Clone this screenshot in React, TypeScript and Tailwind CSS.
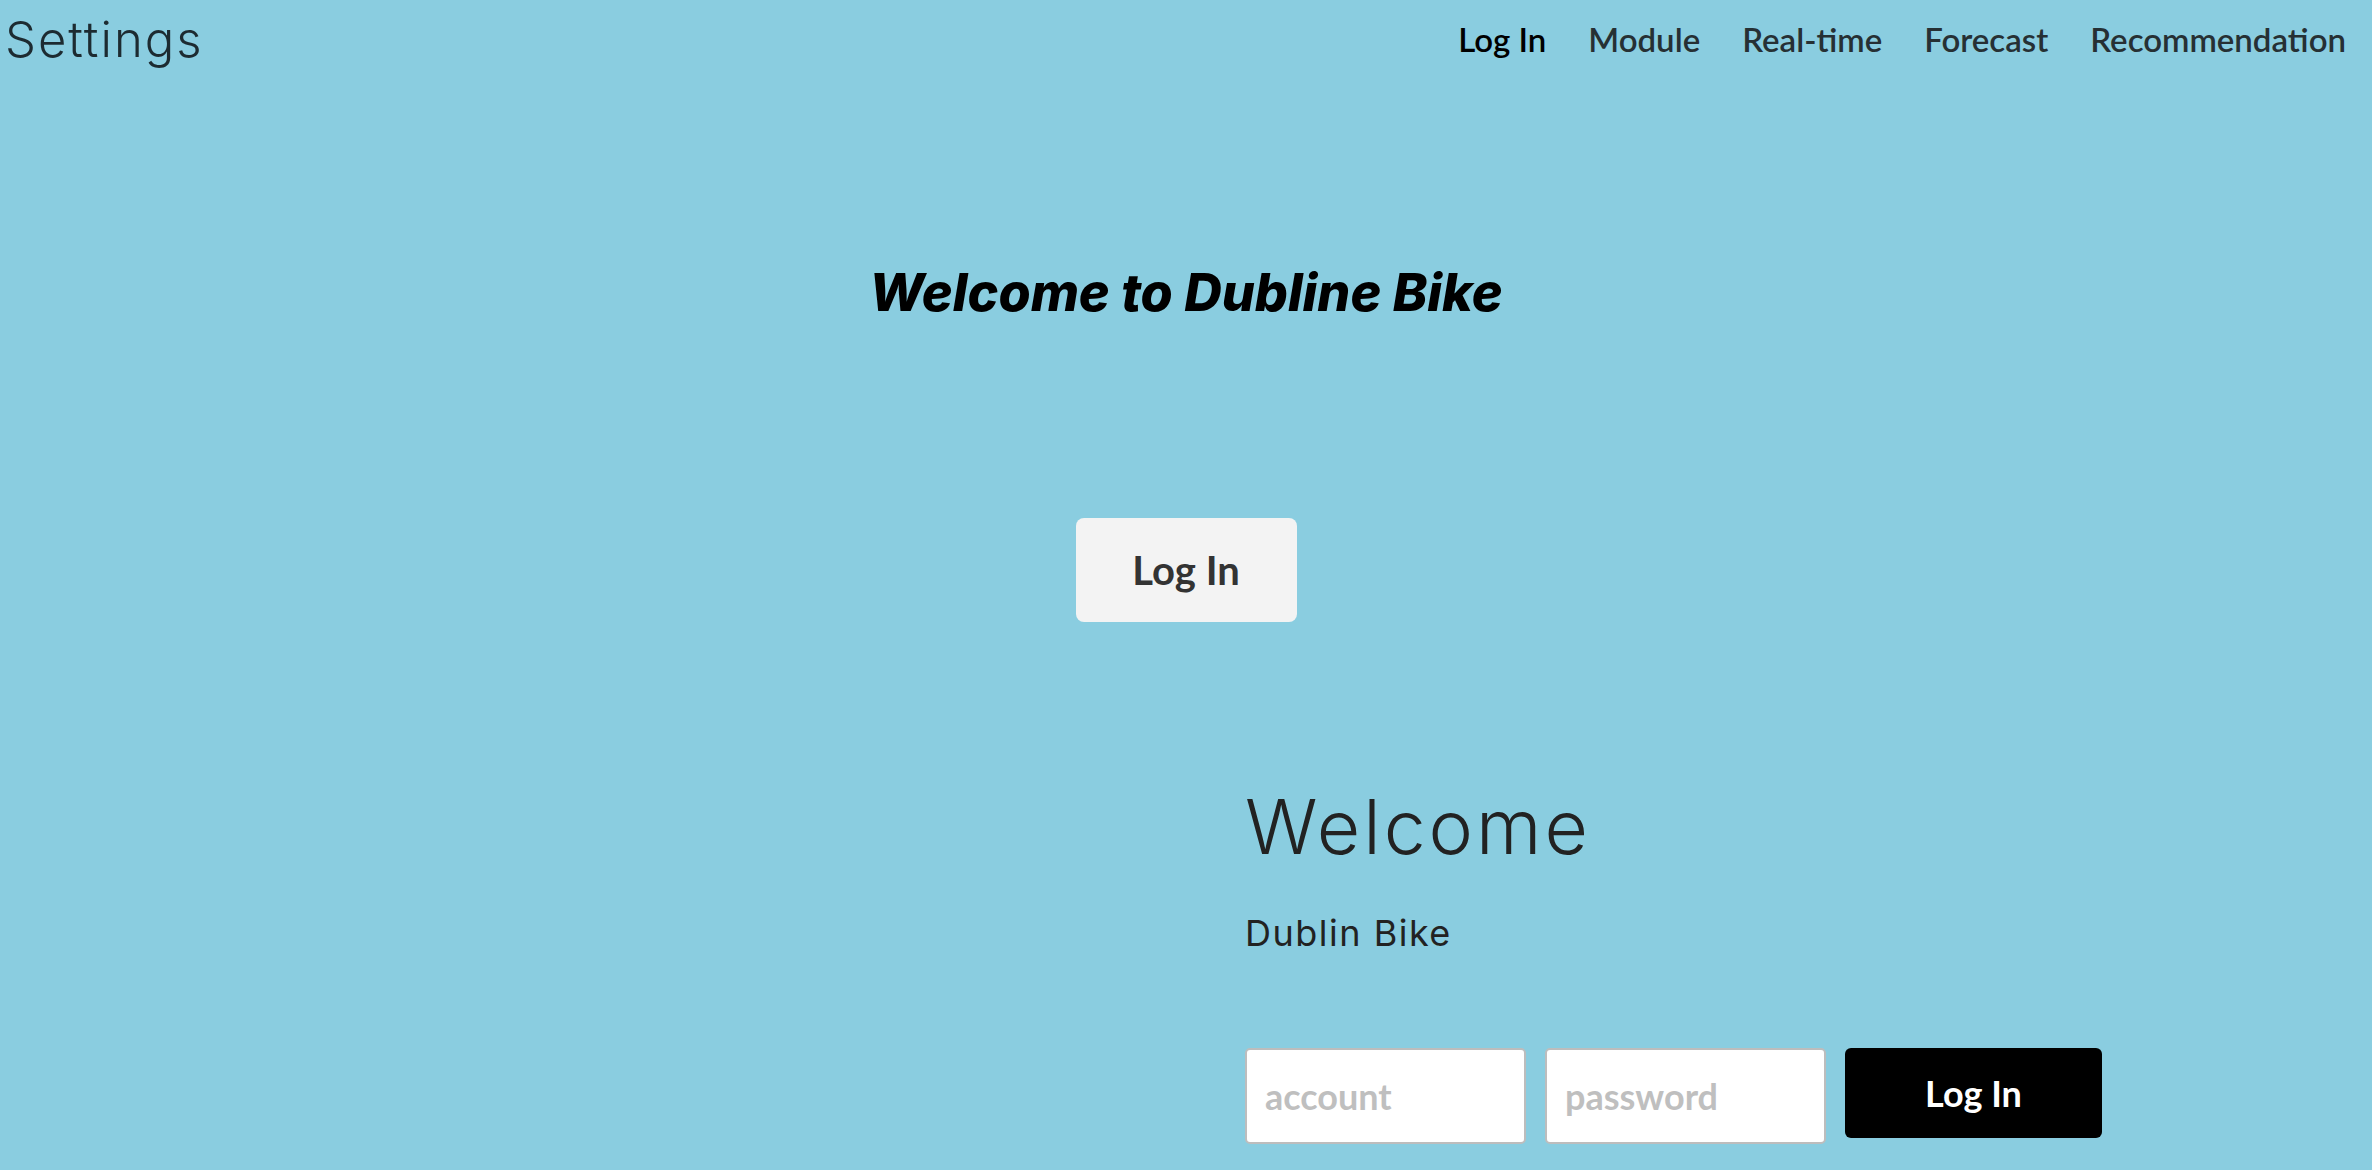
import React from 'react';

const futura = { fontFamily: 'Lato, "Noto Sans", sans-serif' };
const mont = { fontFamily: 'Inter, "Noto Sans", sans-serif' };

const navItems = ['Log In', 'Module', 'Real-time', 'Forecast', 'Recommendation'];

export default function App() {
  return (
    <div className="min-h-screen w-full bg-[#8acde0]">
      {/* Header */}
      <header className="flex items-start justify-between pl-[5px] pr-[26px] pt-[15px]">
        <div style={mont} className="text-[49px] font-light leading-none tracking-[2px] text-[#1d2b31]">
          Settings
        </div>
        <nav style={futura} className="flex items-center gap-[42px] pt-[8px]">
          {navItems.map((item, i) => (
            <a
              key={item}
              className={`text-[33px] font-semibold leading-none ${i === 0 ? 'text-black' : 'text-[#263034]'}`}
            >
              {item}
            </a>
          ))}
        </nav>
      </header>

      {/* Hero */}
      <section className="flex flex-col items-center pt-[203px]">
        <h1 style={mont} className="text-[52px] font-extrabold italic leading-none text-black">
          Welcome to Dubline Bike
        </h1>
        <button
          style={futura}
          className="mt-[199px] h-[104px] w-[221px] rounded-[8px] bg-[#f3f3f3] text-[40px] font-bold text-[#333]"
        >
          Log In
        </button>
      </section>

      {/* Login panel */}
      <section className="grid grid-cols-2 pt-[167px]">
        <div />
        <div className="pl-[59px]">
          <h2 style={mont} className="text-[75px] font-light leading-none tracking-[3px] text-[#222]">
            Welcome
          </h2>
          <p style={mont} className="mt-[51px] text-[36px] font-normal leading-none tracking-[1.5px] text-[#222]">
            Dublin Bike
          </p>
          <form style={futura} className="mt-[97px] flex items-start gap-[19px]">
            <input
              placeholder="account"
              className="h-[96px] w-[281px] rounded-[5px] border-2 border-[#bdbdbd] bg-white px-[18px] text-[36px] font-bold outline-none placeholder:text-[#bfbfbf]"
            />
            <input
              placeholder="password"
              className="h-[96px] w-[281px] rounded-[5px] border-2 border-[#bdbdbd] bg-white px-[18px] text-[36px] font-bold outline-none placeholder:text-[#bfbfbf]"
            />
            <button
              type="button"
              className="h-[90px] w-[257px] rounded-[6px] bg-black text-[36px] font-bold text-white"
            >
              Log In
            </button>
          </form>
        </div>
      </section>
    </div>
  );
}
